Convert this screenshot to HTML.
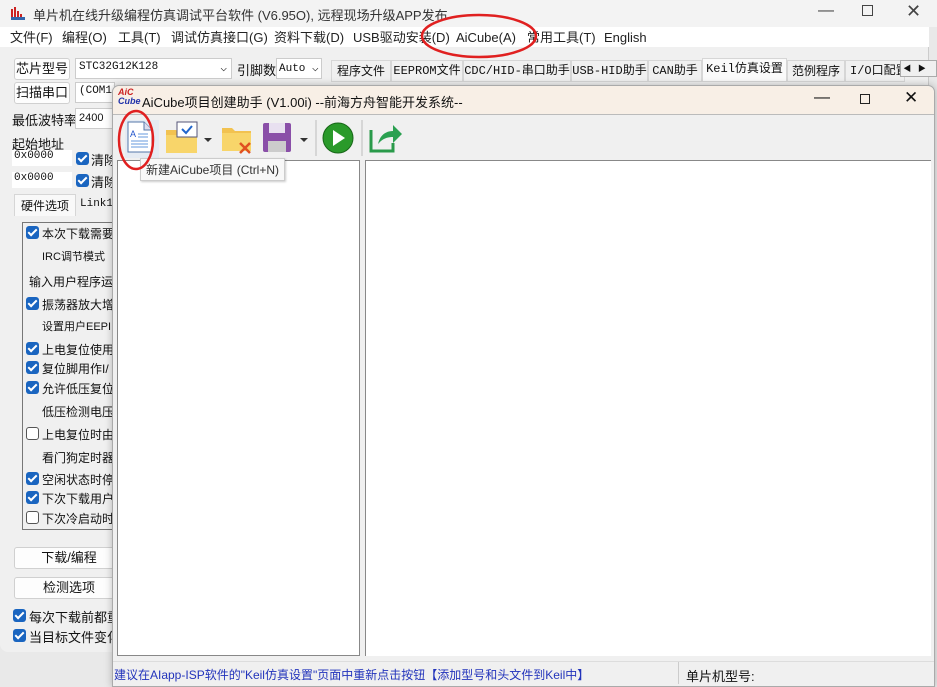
<!DOCTYPE html>
<html><head><meta charset="utf-8"><style>
*{margin:0;padding:0;box-sizing:border-box}
body{width:937px;height:687px;overflow:hidden;background:#e9e9e9;font-family:"Liberation Sans","Noto Sans CJK SC",sans-serif;font-size:12px;color:#111;position:relative}
.abs{position:absolute;white-space:nowrap}
.mono{font-family:"Liberation Mono","Noto Sans CJK SC",monospace}
.btn{position:absolute;background:#fdfdfd;border:1px solid #d0d0d0;border-radius:3px;text-align:center}
.cb{position:absolute;width:13px;height:13px;border-radius:3px;background:#1a65c0}
.cb:after{content:"";position:absolute;left:4px;top:1px;width:3px;height:7px;border:solid #fff;border-width:0 2px 2px 0;transform:rotate(45deg)}
.cbe{position:absolute;width:13px;height:13px;border-radius:3px;border:1px solid #555;background:#fff}
.tab{position:absolute;top:60px;height:22px;border:1px solid #d6d6d6;background:#f0f0f0;line-height:20px;font-size:12px;text-align:center;overflow:hidden;white-space:nowrap}
.m{position:absolute;top:29px;height:18px;line-height:18px;font-size:13px;color:#222;white-space:nowrap;font-family:"Liberation Sans","Noto Sans CJK SC",sans-serif}
</style></head><body>
<!-- main window -->
<div class="abs" style="left:0;top:0;width:929px;height:652px;background:#f0f0f0;border-radius:0 0 8px 8px;border-right:1px solid #ccc"></div>
<div class="abs" style="left:0;top:0;width:937px;height:27px;background:#f3f3f3"></div>
<svg class="abs" style="left:10px;top:5px" width="16" height="16"><path d="M2 14V4M5 14V2M8 14V6M11 14V9" stroke="#c22" stroke-width="2"/><rect x="1" y="12" width="14" height="3" fill="#36a"/></svg>
<div class="abs" style="left:33px;top:5px;font-size:13px;color:#333">单片机在线升级编程仿真调试平台软件 (V6.95O), 远程现场升级APP发布</div>
<div class="abs" style="left:818px;top:2px;font-size:16px;color:#444">—</div>
<div class="abs" style="left:862px;top:5px;width:11px;height:11px;border:1px solid #444"></div>
<div class="abs" style="left:906px;top:1px;font-size:18px;color:#444">✕</div>
<div class="abs" style="left:0;top:27px;width:929px;height:20px;background:#fff"></div>
<div class="m" style="left:10px">文件(F)</div>
<div class="m" style="left:62px">编程(O)</div>
<div class="m" style="left:118px">工具(T)</div>
<div class="m" style="left:171px">调试仿真接口(G)</div>
<div class="m" style="left:274px">资料下载(D)</div>
<div class="m" style="left:353px">USB驱动安装(D)</div>
<div class="m" style="left:456px">AiCube(A)</div>
<div class="m" style="left:527px">常用工具(T)</div>
<div class="m" style="left:604px">English</div>
<!-- left controls -->
<div class="btn" style="left:14px;top:58px;width:56px;height:22px;line-height:20px;font-size:13px">芯片型号</div>
<div class="abs mono" style="left:75px;top:58px;width:157px;height:21px;background:#fff;border:1px solid #ccc;padding:2px 3px;font-size:11px">STC32G12K128<span style="position:absolute;right:4px">⌵</span></div>
<div class="abs" style="left:237px;top:60px;font-size:13px">引脚数</div>
<div class="abs mono" style="left:276px;top:58px;width:46px;height:21px;background:#fff;border:1px solid #ccc;padding:2px 2px;font-size:11px">Auto ⌵</div>
<div class="btn" style="left:14px;top:82px;width:56px;height:22px;line-height:20px;font-size:13px">扫描串口</div>
<div class="abs mono" style="left:75px;top:82px;width:40px;height:21px;background:#fff;border:1px solid #ccc;padding:2px 3px;font-size:11px;overflow:hidden">(COM1)</div>
<div class="abs" style="left:12px;top:110px;font-size:13px">最低波特率</div>
<div class="abs" style="left:75px;top:108px;width:40px;height:21px;background:#fff;border:1px solid #ccc;padding:3px 3px;font-size:11px">2400</div>
<div class="abs" style="left:12px;top:134px;font-size:13px">起始地址</div>
<div class="abs mono" style="left:12px;top:150px;width:60px;height:16px;background:#fff;font-size:11px;padding-left:2px">0x0000</div>
<div class="cb" style="left:76px;top:152px"></div><div class="abs" style="left:91px;top:150px;font-size:13px">清除</div>
<div class="abs mono" style="left:12px;top:172px;width:60px;height:16px;background:#fff;font-size:11px;padding-left:2px">0x0000</div>
<div class="cb" style="left:76px;top:174px"></div><div class="abs" style="left:91px;top:172px;font-size:13px">清除</div>
<div class="abs" style="left:14px;top:194px;width:62px;height:22px;background:#f9f9f9;border:1px solid #d6d6d6;border-bottom:none;font-size:12px;padding:2px 6px">硬件选项</div>
<div class="abs mono" style="left:80px;top:198px;font-size:11px">Link1</div>
<div class="abs" style="left:22px;top:222px;width:100px;height:308px;border:1px solid #777"></div>
<div class="cb" style="left:26px;top:226px"></div><div class="abs" style="left:42px;top:225px;font-size:12px">本次下载需要</div>
<div class="abs" style="left:42px;top:248px;font-size:11px">IRC调节模式</div>
<div class="abs" style="left:29px;top:273px;font-size:12px">输入用户程序运</div>
<div class="cb" style="left:26px;top:297px"></div><div class="abs" style="left:42px;top:296px;font-size:12px">振荡器放大增</div>
<div class="abs" style="left:42px;top:318px;font-size:11px">设置用户EEPI</div>
<div class="cb" style="left:26px;top:342px"></div><div class="abs" style="left:42px;top:341px;font-size:12px">上电复位使用</div>
<div class="cb" style="left:26px;top:361px"></div><div class="abs" style="left:42px;top:360px;font-size:12px">复位脚用作I/</div>
<div class="cb" style="left:26px;top:381px"></div><div class="abs" style="left:42px;top:380px;font-size:12px">允许低压复位</div>
<div class="abs" style="left:42px;top:403px;font-size:12px">低压检测电压</div>
<div class="cbe" style="left:26px;top:427px"></div><div class="abs" style="left:42px;top:426px;font-size:12px">上电复位时由</div>
<div class="abs" style="left:42px;top:449px;font-size:12px">看门狗定时器</div>
<div class="cb" style="left:26px;top:472px"></div><div class="abs" style="left:42px;top:471px;font-size:12px">空闲状态时停</div>
<div class="cb" style="left:26px;top:491px"></div><div class="abs" style="left:42px;top:490px;font-size:12px">下次下载用户</div>
<div class="cbe" style="left:26px;top:511px"></div><div class="abs" style="left:42px;top:510px;font-size:12px">下次冷启动时</div>
<div class="btn" style="left:14px;top:547px;width:110px;height:22px;line-height:20px;font-size:13px">下载/编程</div>
<div class="btn" style="left:14px;top:577px;width:110px;height:22px;line-height:20px;font-size:13px">检测选项</div>
<div class="cb" style="left:13px;top:609px"></div><div class="abs" style="left:29px;top:607px;font-size:13px">每次下载前都重</div>
<div class="cb" style="left:13px;top:629px"></div><div class="abs" style="left:29px;top:627px;font-size:13px">当目标文件变化</div>
<!-- tabs -->
<div class="tab" style="left:331px;width:60px">程序文件</div>
<div class="tab mono" style="left:391px;width:72px">EEPROM文件</div>
<div class="tab mono" style="left:463px;width:108px">CDC/HID-串口助手</div>
<div class="tab mono" style="left:571px;width:77px">USB-HID助手</div>
<div class="tab mono" style="left:648px;width:54px">CAN助手</div>
<div class="tab mono" style="left:702px;top:58px;background:#fafafa;height:24px;width:85px">Keil仿真设置</div>
<div class="tab" style="left:787px;width:58px">范例程序</div>
<div class="tab mono" style="left:845px;width:60px;text-align:left;padding-left:4px">I/O口配置</div>
<div class="abs" style="left:900px;top:60px;width:37px;height:17px;background:#f0f0f0;border:1px solid #aaa;font-size:8px;line-height:15px">&nbsp;◀&nbsp;&nbsp;&nbsp;▶</div>
<!-- dialog -->
<div class="abs" style="left:112px;top:85px;width:823px;height:602px;background:#f0f0f0;border:1px solid #aaa;border-radius:7px 7px 0 0;box-shadow:0 0 8px rgba(0,0,0,.25)"></div>
<div class="abs" style="left:113px;top:86px;width:821px;height:29px;background:#f8efe6;border-radius:7px 7px 0 0;border-bottom:1px solid #bbb"></div>
<div class="abs" style="left:118px;top:88px;font-size:9px;font-style:italic;color:#c22;font-weight:bold;line-height:9px">AiC<br><span style="color:#23a">Cube</span></div>
<div class="abs" style="left:142px;top:92px;font-size:13px">AiCube项目创建助手 (V1.00i) --前海方舟智能开发系统--</div>
<div class="abs" style="left:814px;top:89px;font-size:16px">—</div>
<div class="abs" style="left:860px;top:94px;width:10px;height:10px;border:1.5px solid #222"></div>
<div class="abs" style="left:904px;top:88px;font-size:17px">✕</div>
<!-- toolbar icons -->
<svg class="abs" style="left:113px;top:116px" width="300" height="44">
<rect x="12" y="4" width="34" height="38" fill="#dde8f5" opacity=".6"/>
<path d="M15 6h16l8 8v22H15z" fill="#fff" stroke="#5577aa"/><path d="M31 6v8h8" fill="#dde" stroke="#5577aa"/>
<text x="17" y="21" font-size="9" fill="#2255cc" font-family="Liberation Sans">A</text>
<path d="M25 18h10M25 21h10M18 25h17M18 28h17M18 31h17" stroke="#6699dd"/>
<path d="M53 14h10l3 3h18v20H53z" fill="#f2c250"/><rect x="53" y="19" width="31" height="18" fill="#f8d56a"/>
<rect x="64" y="6" width="20" height="15" fill="#fff" stroke="#557"/><path d="M69 13l4 4 6-7" stroke="#2266cc" stroke-width="2" fill="none"/>
<path d="M91 22l4 4 4-4z" fill="#333"/>
<path d="M109 12h10l3 3h16v20h-29z" fill="#f2c250"/><rect x="109" y="17" width="29" height="18" fill="#f8d56a"/>
<path d="M127 27l10 10M137 27l-10 10" stroke="#e05020" stroke-width="2.5"/>
<rect x="150" y="7" width="28" height="29" rx="2" fill="#8a4fa8"/><rect x="156" y="7" width="16" height="10" fill="#e8e0f0"/><rect x="155" y="25" width="18" height="11" fill="#ccc"/>
<path d="M187 22l4 4 4-4z" fill="#333"/>
<line x1="203" y1="4" x2="203" y2="40" stroke="#bbb"/>
<circle cx="225" cy="22" r="15" fill="#2a9a2a" stroke="#176617"/><path d="M220 14v16l12-8z" fill="#fff"/>
<line x1="249" y1="4" x2="249" y2="40" stroke="#bbb"/>
<path d="M258 14v21h22v-8" fill="none" stroke="#2a9a4a" stroke-width="3"/><path d="M265 28c2-9 8-13 15-13v-6l9 9-9 9v-6c-6 0-11 2-15 7z" fill="#2aa050"/>
</svg>
<!-- panes -->
<div class="abs" style="left:117px;top:160px;width:243px;height:496px;background:#fff;border:1px solid #888"></div>
<div class="abs" style="left:365px;top:160px;width:566px;height:496px;background:#fff;border-left:1px solid #888;border-top:1px solid #888"></div>
<div class="abs" style="left:140px;top:158px;background:#f8f8f8;border:1px solid #ccc;padding:2px 5px;font-size:12px;color:#333;box-shadow:1px 1px 2px rgba(0,0,0,.2)">新建AiCube项目 (Ctrl+N)</div>
<div class="abs" style="left:113px;top:661px;width:821px;height:1px;background:#ddd"></div>
<div class="abs" style="left:114px;top:666px;font-size:12px;color:#2233bb">建议在AIapp-ISP软件的"Keil仿真设置"页面中重新点击按钮【添加型号和头文件到Keil中】</div>
<div class="abs" style="left:678px;top:662px;width:1px;height:22px;background:#ccc"></div>
<div class="abs" style="left:686px;top:666px;font-size:13px">单片机型号:</div>
<!-- red ellipses -->
<svg class="abs" style="left:0;top:0" width="937" height="687">
<ellipse cx="479" cy="36" rx="57" ry="21" fill="none" stroke="#e02020" stroke-width="2.5"/>
<ellipse cx="136" cy="140" rx="17" ry="29" fill="none" stroke="#e02020" stroke-width="2.5"/>
</svg>
</body></html>
